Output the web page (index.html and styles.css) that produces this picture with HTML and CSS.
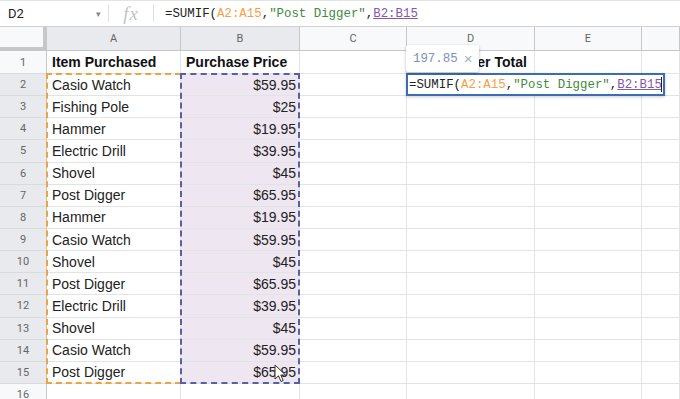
FILE: index.html
```html
<!DOCTYPE html>
<html lang="en">
<head>
    <meta charset="UTF-8">
    <meta name="viewport" content="width=device-width, initial-scale=1.0">
    <title>Sheet</title>
    <link rel="stylesheet" href="styles.css">
</head>
<body>
    <div class="toolbar">
        <div class="namebox"><span>D2</span><span class="caret">&#9662;</span></div>
        <div class="sep"></div>
        <div class="fx">fx</div>
        <div class="sep"></div>
        <div class="formula mono">=SUMIF(<span class="ref-a">A2:A15</span>,<span class="str">"Post Digger"</span>,<span class="ref-b">B2:B15</span></div>
    </div>

    <div class="wrap">
        <div class="sheet">
            <!-- column headers -->
            <div class="corner"></div>
            <div class="ch sel">A</div>
            <div class="ch sel">B</div>
            <div class="ch">C</div>
            <div class="ch">D</div>
            <div class="ch">E</div>
            <div class="ch"></div>

            <div class="rh">1</div>
            <div class="c bold">Item Purchased</div>
            <div class="c bold">Purchase Price</div>
            <div class="c"></div>
            <div class="c bold">Post Digger Total</div>
            <div class="c"></div>
            <div class="c"></div>

            <div class="rh sel">2</div><div class="c">Casio Watch</div><div class="c num hl">$59.95</div><div class="c"></div><div class="c"></div><div class="c"></div><div class="c"></div>
            <div class="rh sel">3</div><div class="c">Fishing Pole</div><div class="c num hl">$25</div><div class="c"></div><div class="c"></div><div class="c"></div><div class="c"></div>
            <div class="rh sel">4</div><div class="c">Hammer</div><div class="c num hl">$19.95</div><div class="c"></div><div class="c"></div><div class="c"></div><div class="c"></div>
            <div class="rh sel">5</div><div class="c">Electric Drill</div><div class="c num hl">$39.95</div><div class="c"></div><div class="c"></div><div class="c"></div><div class="c"></div>
            <div class="rh sel">6</div><div class="c">Shovel</div><div class="c num hl">$45</div><div class="c"></div><div class="c"></div><div class="c"></div><div class="c"></div>
            <div class="rh sel">7</div><div class="c">Post Digger</div><div class="c num hl">$65.95</div><div class="c"></div><div class="c"></div><div class="c"></div><div class="c"></div>
            <div class="rh sel">8</div><div class="c">Hammer</div><div class="c num hl">$19.95</div><div class="c"></div><div class="c"></div><div class="c"></div><div class="c"></div>
            <div class="rh sel">9</div><div class="c">Casio Watch</div><div class="c num hl">$59.95</div><div class="c"></div><div class="c"></div><div class="c"></div><div class="c"></div>
            <div class="rh sel">10</div><div class="c">Shovel</div><div class="c num hl">$45</div><div class="c"></div><div class="c"></div><div class="c"></div><div class="c"></div>
            <div class="rh sel">11</div><div class="c">Post Digger</div><div class="c num hl">$65.95</div><div class="c"></div><div class="c"></div><div class="c"></div><div class="c"></div>
            <div class="rh sel">12</div><div class="c">Electric Drill</div><div class="c num hl">$39.95</div><div class="c"></div><div class="c"></div><div class="c"></div><div class="c"></div>
            <div class="rh sel">13</div><div class="c">Shovel</div><div class="c num hl">$45</div><div class="c"></div><div class="c"></div><div class="c"></div><div class="c"></div>
            <div class="rh sel">14</div><div class="c">Casio Watch</div><div class="c num hl">$59.95</div><div class="c"></div><div class="c"></div><div class="c"></div><div class="c"></div>
            <div class="rh sel">15</div><div class="c">Post Digger</div><div class="c num hl">$65.95</div><div class="c"></div><div class="c"></div><div class="c"></div><div class="c"></div>
            <div class="rh">16</div><div class="c"></div><div class="c"></div><div class="c"></div><div class="c"></div><div class="c"></div><div class="c"></div>
        </div>

        <!-- layer drawn over the cells: referenced ranges and the open editor -->
        <div class="overlay">
            <div class="range range-a"></div>
            <div class="range range-b"></div>
            <div class="editor mono">=SUMIF(<span class="ref-a">A2:A15</span>,<span class="str">"Post Digger"</span>,<span class="ref-b">B2:B15</span><span class="caret-line"></span><div class="tip"><span class="tip-val">197.85</span><span class="tip-x">&times;</span></div></div>
        </div>

        <svg class="pointer" width="13" height="20" viewBox="0 0 13 20">
            <path d="M1 1 L1 15 L4.5 11.8 L7 17.5 L9.2 16.5 L6.8 11 L11.5 11 Z" fill="#fff" stroke="#333" stroke-width="1"/>
        </svg>
    </div>
</body>
</html>
```

FILE: styles.css
```css
* {
    box-sizing: border-box;
}

body {
    margin: 0;
    background: #fff;
    overflow: hidden;
    font-family: 'Liberation Sans', Arial, sans-serif;
}

.mono {
    font-family: 'Liberation Mono', 'DejaVu Sans Mono', monospace;
    font-size: 12.4px;
    color: #222;
}

.toolbar {
    display: flex;
    align-items: center;
    height: 27px;
    border-top: 1px solid #e3e3e3;
    border-bottom: 1px solid #d0d0d0;
}

.namebox {
    display: flex;
    justify-content: space-between;
    align-items: center;
    width: 108px;
    padding: 0 7px 0 8px;
    font-family: Roboto, 'Liberation Sans', sans-serif;
    font-size: 13px;
    color: #222;
}

.caret {
    font-size: 9px;
    color: #888;
}

.sep {
    width: 1px;
    height: 17px;
    background: #e0e0e0;
}

.fx {
    width: 44px;
    text-align: center;
    font-family: 'Liberation Serif', serif;
    font-style: italic;
    font-size: 19px;
    color: #c4c4c4;
    letter-spacing: 1px;
}

.formula {
    padding-left: 11px;
    white-space: nowrap;
}

.ref-a {
    color: #f4a145;
}

.str {
    color: #3f8a3c;
}

.ref-b {
    color: #8457b0;
    text-decoration: underline;
}

.wrap {
    position: relative;
}

.sheet,
.overlay {
    display: grid;
    grid-template-columns: 47px 134px 119px 107px 128px 107px 1fr;
    grid-template-rows: 24px 23px repeat(14, 22.15px) 22px;
}

.overlay {
    position: absolute;
    inset: 0;
    pointer-events: none;
}

.corner {
    background: #f8f9fa;
    border-right: 4px solid #c7c7c7;
    border-bottom: 4px solid #c7c7c7;
}

.ch {
    display: flex;
    align-items: center;
    justify-content: center;
    background: #f8f9fa;
    border-right: 1px solid #c7c7c7;
    border-bottom: 1px solid #c7c7c7;
    font-family: Roboto, 'Liberation Sans', sans-serif;
    font-size: 11px;
    color: #666;
}

.rh {
    display: flex;
    align-items: center;
    justify-content: center;
    background: #f8f9fa;
    border-right: 1px solid #c7c7c7;
    border-bottom: 1px solid #dadada;
    font-family: Roboto, 'Liberation Sans', sans-serif;
    font-size: 11px;
    color: #666;
}

.sel {
    background: #e8eaed;
}

.c {
    display: flex;
    align-items: center;
    padding: 0 3px 0 5px;
    border-right: 1px solid #e2e3e3;
    border-bottom: 1px solid #e2e3e3;
    font-size: 14px;
    color: #222;
    white-space: nowrap;
    overflow: visible;
}

.bold {
    font-weight: bold;
    color: #111;
}

.num {
    justify-content: flex-end;
}

.hl {
    background: #eee6f1;
}

.range {
    margin: -1px 0 0 -1px;
}

.range-a {
    grid-row: 3 / 17;
    grid-column: 2;
    border: 2px dashed #f0a33c;
    border-right: none;
}

.range-b {
    grid-row: 3 / 17;
    grid-column: 3;
    border: 2px dashed #5a5ea6;
}

.editor {
    grid-row: 3;
    grid-column: 5;
    justify-self: start;
    position: relative;
    display: flex;
    align-items: center;
    width: max-content;
    height: 23px;
    margin: -1px 0 0 -1px;
    padding: 0 1px;
    background: #fff;
    border: 2px solid #3b6db4;
    white-space: pre;
    box-shadow: 0 1px 3px rgba(0, 0, 0, 0.2);
}

.caret-line {
    width: 1px;
    height: 15px;
    background: #222;
    margin-left: -1px;
}

.tip {
    position: absolute;
    left: -2px;
    bottom: calc(100% + 3px);
    height: 27px;
    display: flex;
    align-items: center;
    padding: 0 7px;
    background: #fff;
    box-shadow: 0 1px 3px rgba(0, 0, 0, 0.3);
    border-radius: 2px;
}

.tip-val {
    color: #7b8fbf;
}

.tip-x {
    margin-left: 6px;
    color: #aab0bd;
    font-family: 'Liberation Sans', sans-serif;
    font-size: 15px;
}

.pointer {
    position: absolute;
    left: 274px;
    top: 337px;
}
```
